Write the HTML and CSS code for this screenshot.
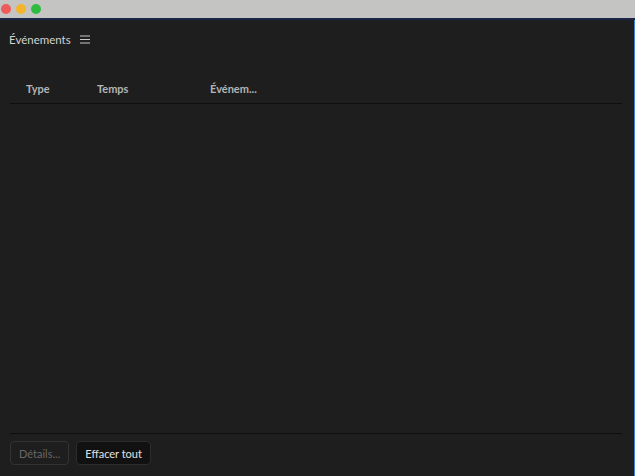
FILE: index.html
```html
<!DOCTYPE html>
<html>
<head>
    <meta charset="UTF-8">
    <title>Événements</title>
    <link rel="stylesheet" href="styles.css">
</head>
<body>
    <div class="fenetre">
        <div class="barre-titre">
            <span class="feu rouge"></span>
            <span class="feu jaune"></span>
            <span class="feu vert"></span>
        </div>

        <div class="panneau">
            <div class="entete">
                <span class="titre">Événements</span>
                <svg class="menu" width="10" height="9" viewBox="0 0 10 9">
                    <path d="M0 1h10M0 4.5h10M0 8h10" stroke="#c8c8c8" stroke-width="1"/>
                </svg>
            </div>

            <div class="tableau">
                <div class="ligne-titres">
                    <span class="col col-type">Type</span>
                    <span class="col col-temps">Temps</span>
                    <span class="col col-evt">Événem...</span>
                </div>
                <div class="corps"></div>
            </div>

            <div class="pied">
                <button class="bouton inactif">Détails...</button>
                <button class="bouton">Effacer tout</button>
            </div>
        </div>
    </div>
</body>
</html>
```

FILE: styles.css
```css
html, body {
    margin: 0;
    height: 100%;
}
body {
    background-color: #1e1e1e;
    font-family: Lato, "Open Sans", sans-serif;
    overflow: hidden;
}
.fenetre {
    height: 100%;
    display: flex;
    flex-direction: column;
}
.barre-titre {
    height: 18px;
    background-color: #c4c4c2;
    border-bottom: 2px solid #1c2748;
    display: flex;
    align-items: center;
    gap: 5px;
    padding-left: 1px;
}
.feu {
    width: 10px;
    height: 10px;
    border-radius: 50%;
}
.rouge { background-color: #ee5b5b; }
.jaune { background-color: #f4b52a; }
.vert { background-color: #2fbb3f; }

.panneau {
    flex: 1;
    display: flex;
    flex-direction: column;
    border-right: 1px solid #3f7fd6;
}
.entete {
    height: 38px;
    display: flex;
    align-items: center;
    padding-left: 9px;
    gap: 9px;
}
.titre {
    color: #d2d2d2;
    font-size: 11.5px;
}
.menu {
    margin-top: 1px;
}
.tableau {
    flex: 1;
    display: flex;
    flex-direction: column;
    margin: 0 12px 0 10px;
    border-bottom: 1px solid #0e0e0e;
}
.ligne-titres {
    height: 30px;
    margin-top: 15px;
    display: flex;
    align-items: center;
    border-bottom: 1px solid #0e0e0e;
}
.col {
    color: #b4b4b4;
    font-size: 11px;
    font-weight: bold;
}
.col-type {
    padding-left: 16px;
    width: 71px;
}
.col-temps {
    width: 113px;
}
.corps {
    flex: 1;
}
.pied {
    height: 42px;
    display: flex;
    align-items: flex-start;
    gap: 7px;
    padding: 7px 0 0 10px;
    box-sizing: border-box;
}
.bouton {
    height: 24px;
    padding: 0 8px;
    font-family: Lato, "Open Sans", sans-serif;
    font-size: 11px;
    border-radius: 4px;
    background-color: #111111;
    color: #e2e2e2;
    border: 1px solid #2c2c2c;
}
.bouton.inactif {
    background-color: transparent;
    color: #686868;
    border-color: #333333;
}
```
